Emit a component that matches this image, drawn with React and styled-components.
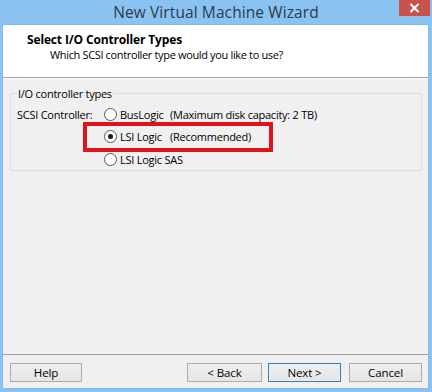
import React from "react";
import styled, { createGlobalStyle } from "styled-components";

const Global = createGlobalStyle`
  html, body { margin: 0; padding: 0; }
  body {
    background: #8ac3f1;
    font-family: "Open Sans", "Noto Sans", "DejaVu Sans", sans-serif;
    font-size: 11px;
    letter-spacing: -0.25px;
    color: #000;
  }
`;

const Window = styled.div`
  width: 432px;
  height: 392px;
  box-sizing: border-box;
  background: #8ac3f1;
  display: flex;
  flex-direction: column;
  padding: 0 4px 4px 3px;
`;

const TitleBar = styled.div`
  height: 25px;
  flex: none;
  display: grid;
  grid-template-columns: 1fr auto 1fr;
  margin: 0 -4px 0 -3px;
`;

const Title = styled.div`
  grid-column: 2;
  font-size: 15.5px;
  line-height: 24px;
  color: #2a3b4d;
  white-space: nowrap;
  letter-spacing: 0.1px;
`;

const CloseButton = styled.div`
  grid-column: 3;
  justify-self: end;
  align-self: start;
  width: 31px;
  height: 16px;
  margin-right: 2px;
  background: #c9514c;
  display: flex;
  align-items: center;
  justify-content: center;
`;

const Client = styled.div`
  flex: 1;
  display: flex;
  flex-direction: column;
  background: #f0f0f0;
  box-shadow: 0 0 0 0.5px #78b0e0;
`;

const Header = styled.div`
  height: 53px;
  box-sizing: border-box;
  background: #fff;
  border-bottom: 1px solid #a0a0a0;
  padding: 7px 0 0 24px;
  flex: none;
`;

const Heading = styled.div`
  font-weight: bold;
  line-height: 15px;
  font-size: 12px;
  letter-spacing: -0.15px;
`;

const SubHeading = styled.div`
  line-height: 15px;
  padding-left: 23px;
  letter-spacing: -0.35px;
`;

const Body = styled.div`
  flex: 1;
  border-top: 1px solid #fff;
  padding: 7px 6px 0 7px;
`;

const Group = styled.fieldset`
  margin: 0;
  padding: 2px 0 3px 6px;
  border: 1px solid #dcdcdc;
  border-radius: 2px;
  height: 85px;
  box-sizing: border-box;
`;

const Legend = styled.legend`
  padding: 0 1px;
  margin-left: 0;
  line-height: 15px;
`;

const Options = styled.div`
  position: relative;
  display: grid;
  grid-template-columns: 87px 66px auto;
  grid-auto-rows: 22.5px;
  align-items: center;
`;

const Cell = styled.div`
  display: flex;
  align-items: center;
  grid-column: ${(p) => p.$col};
  white-space: nowrap;
`;

const RadioCircle = styled.span`
  width: 11px;
  height: 11px;
  border-radius: 50%;
  border: 1px solid #555;
  background: #fff;
  display: inline-flex;
  align-items: center;
  justify-content: center;
  margin-right: 3px;
  flex: none;
  &::after {
    content: "";
    width: 5px;
    height: 5px;
    border-radius: 50%;
    background: #1a1a1a;
    display: ${(p) => (p.$checked ? "block" : "none")};
  }
`;

const Highlight = styled.div`
  position: absolute;
  left: 66px;
  top: 19px;
  width: 190px;
  height: 30px;
  box-sizing: border-box;
  border: 4px solid #e0121b;
  pointer-events: none;
`;

const Footer = styled.div`
  flex: none;
  border-top: 1px solid #a0a0a0;
  height: 34px;
  box-sizing: border-box;
  padding: 8px 6px 0 7px;
  display: flex;
  align-items: flex-start;
`;

const Button = styled.div`
  width: ${(p) => p.$w || 73}px;
  height: 19px;
  box-sizing: border-box;
  border: 1px solid ${(p) => (p.$default ? "#3c7fb1" : "#acacac")};
  background: linear-gradient(#efefef, #e5e5e5);
  display: flex;
  align-items: center;
  justify-content: center;
  font-size: 11.5px;
  letter-spacing: -0.1px;
  margin-left: ${(p) => p.$gap || 0}px;
  ${(p) => (p.$default ? "box-shadow: inset 0 0 0 1px #e0eefa;" : "")}
`;

const Spacer = styled.div`
  flex: 1;
`;

function Radio({ checked, children }) {
  return (
    <>
      <RadioCircle $checked={checked} />
      <span>{children}</span>
    </>
  );
}

export default function App() {
  return (
    <>
      <Global />
      <Window>
        <TitleBar>
          <Title>New Virtual Machine Wizard</Title>
          <CloseButton>
            <svg width="11" height="10" viewBox="0 0 11 10">
              <path d="M1.5 1 L9.5 9 M9.5 1 L1.5 9" stroke="#fff" strokeWidth="2" />
            </svg>
          </CloseButton>
        </TitleBar>
        <Client>
          <Header>
            <Heading>Select I/O Controller Types</Heading>
            <SubHeading>Which SCSI controller type would you like to use?</SubHeading>
          </Header>
          <Body>
            <Group>
              <Legend>I/O controller types</Legend>
              <Options>
                <Cell $col={1}>SCSI Controller:</Cell>
                <Cell $col={2}>
                  <Radio>BusLogic</Radio>
                </Cell>
                <Cell $col={3}>(Maximum disk capacity: 2 TB)</Cell>
                <Cell $col={2}>
                  <Radio checked>LSI Logic</Radio>
                </Cell>
                <Cell $col={3}>(Recommended)</Cell>
                <Cell $col={2}>
                  <Radio>LSI Logic SAS</Radio>
                </Cell>
                <Highlight />
              </Options>
            </Group>
          </Body>
          <Footer>
            <Button $w={72}>Help</Button>
            <Spacer />
            <Button $w={75}>&lt; Back</Button>
            <Button $w={73} $gap={6} $default>
              Next &gt;
            </Button>
            <Button $w={73} $gap={8}>
              Cancel
            </Button>
          </Footer>
        </Client>
      </Window>
    </>
  );
}
